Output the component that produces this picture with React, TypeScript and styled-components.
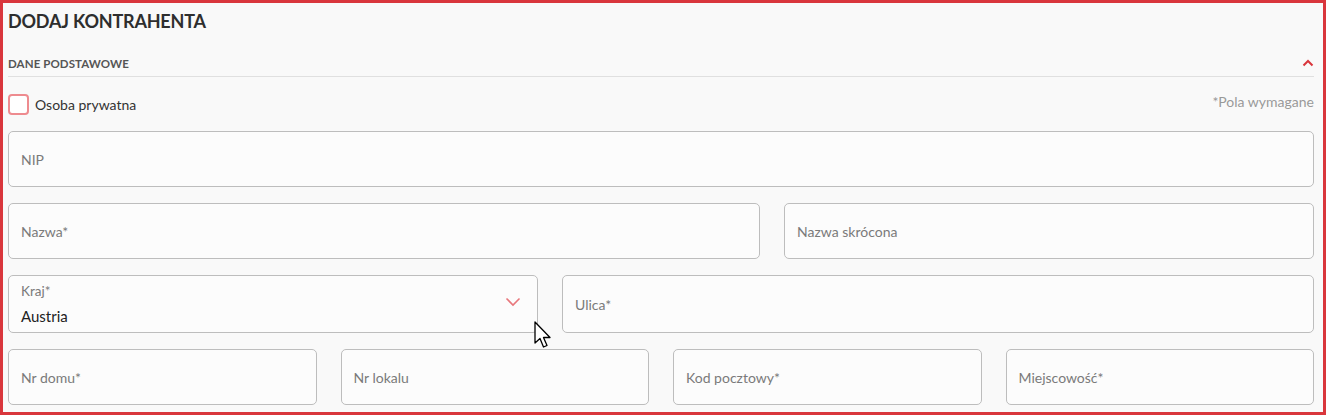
import React from "react";
import styled, { createGlobalStyle } from "styled-components";

const Global = createGlobalStyle`
  html, body { margin: 0; padding: 0; background: #ffffff; }
  body { font-family: Lato, "Open Sans", sans-serif; }
  * { box-sizing: border-box; }
`;

const Frame = styled.div`
  position: relative;
  width: 1326px;
  height: 415px;
  border: 3px solid #d9363c;
  background: #f9f9f9;
  padding: 6px 9px 0 5px;
  overflow: hidden;
`;

const Title = styled.h1`
  margin: 0;
  height: 24px;
  font-size: 18px;
  line-height: 24px;
  font-weight: 700;
  color: #2e2e2e;
  letter-spacing: -0.2px;
`;

const SectionHeader = styled.div`
  margin-top: 19px;
  display: flex;
  align-items: center;
  justify-content: space-between;
  height: 22px;
  padding-bottom: 2px;
  border-bottom: 1px solid #e0e0e0;
  box-sizing: content-box;
`;

const SectionTitle = styled.span`
  font-size: 11.5px;
  font-weight: 700;
  color: #555;
  letter-spacing: 0.1px;
`;

const TopRow = styled.div`
  display: flex;
  align-items: center;
  justify-content: space-between;
  margin-top: 16px;
  height: 22px;
`;

const CheckLabel = styled.label`
  display: flex;
  align-items: center;
  gap: 6px;
  font-size: 14px;
  color: #333;
`;

const Box = styled.span`
  width: 21px;
  height: 21px;
  border: 2px solid #ee8b8f;
  border-radius: 4px;
  background: #fff;
`;

const Required = styled.span`
  font-size: 14px;
  color: #999;
  margin-top: -5px;
`;

const Rows = styled.div`
  margin-top: 16px;
  display: flex;
  flex-direction: column;
  gap: 16px;
`;

const Row = styled.div<{ $cols: string }>`
  display: grid;
  grid-template-columns: ${(p) => p.$cols};
  column-gap: 24px;
`;

const Field = styled.div<{ $h?: number }>`
  position: relative;
  height: ${(p) => p.$h ?? 56}px;
  border: 1px solid #bdbdbd;
  border-radius: 5px;
  background: #fcfcfc;
  padding: 0 12px;
  display: flex;
  align-items: center;
  font-size: 14px;
  color: #7a7a7a;
`;

const SelectField = styled(Field)`
  flex-direction: column;
  align-items: flex-start;
  justify-content: flex-start;
  gap: 7px;
  padding-top: 7px;
`;

const SmallLabel = styled.span`
  font-size: 13.5px;
  color: #7a7a7a;
  line-height: 16px;
`;

const Value = styled.span`
  font-size: 15px;
  color: #222;
  line-height: 20px;
`;

const Chevron = styled.svg`
  position: absolute;
  right: 16px;
  top: 21px;
`;

const Cursor = styled.svg`
  position: absolute;
  left: 531px;
  top: 318px;
`;

export default function App() {
  return (
    <>
      <Global />
      <Frame>
        <Title>DODAJ KONTRAHENTA</Title>
        <SectionHeader>
          <SectionTitle>DANE PODSTAWOWE</SectionTitle>
          <svg width="12" height="8" viewBox="0 0 12 8">
            <path d="M1.5 6.5 L6 2 L10.5 6.5" stroke="#d9363c" strokeWidth="2" fill="none" />
          </svg>
        </SectionHeader>
        <TopRow>
          <CheckLabel>
            <Box />
            Osoba prywatna
          </CheckLabel>
          <Required>*Pola wymagane</Required>
        </TopRow>
        <Rows>
          <Row $cols="1fr">
            <Field>NIP</Field>
          </Row>
          <Row $cols="752fr 530fr">
            <Field>Nazwa*</Field>
            <Field>Nazwa skrócona</Field>
          </Row>
          <Row $cols="530fr 752fr">
            <SelectField $h={58}>
              <SmallLabel>Kraj*</SmallLabel>
              <Value>Austria</Value>
              <Chevron width="16" height="10" viewBox="0 0 16 10">
                <path d="M1.5 1.5 L8 8 L14.5 1.5" stroke="#e8777c" strokeWidth="1.6" fill="none" />
              </Chevron>
            </SelectField>
            <Field $h={58}>Ulica*</Field>
          </Row>
          <Row $cols="1fr 1fr 1fr 1fr">
            <Field>Nr domu*</Field>
            <Field>Nr lokalu</Field>
            <Field>Kod pocztowy*</Field>
            <Field>Miejscowość*</Field>
          </Row>
        </Rows>
        <Cursor width="20" height="30" viewBox="0 0 20 30">
          <path
            d="M1 1 L1 22 L6 17.5 L9.5 26 L13 24.5 L9.5 16.5 L16 16.5 Z"
            fill="#fff"
            stroke="#000"
            strokeWidth="1.3"
            strokeLinejoin="round"
          />
        </Cursor>
      </Frame>
    </>
  );
}
